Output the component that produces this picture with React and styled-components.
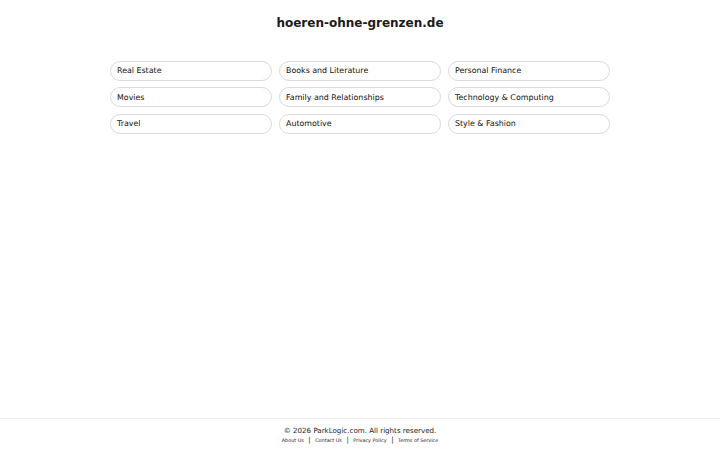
import React from "react";
import styled, { createGlobalStyle } from "styled-components";

const GlobalStyle = createGlobalStyle`
  html, body {
    margin: 0;
    padding: 0;
    background: #ffffff;
    font-family: "DejaVu Sans", "Liberation Sans", sans-serif;
  }
`;

const Page = styled.div`
  min-height: 100vh;
  display: flex;
  flex-direction: column;
`;

const Header = styled.header`
  padding-top: 16px;
  text-align: center;
`;

const Title = styled.h1`
  margin: 0;
  font-size: 12px;
  line-height: 14px;
  font-weight: bold;
  color: #1a1a1a;
`;

const Grid = styled.div`
  width: 500px;
  margin: 30.5px auto 0;
  display: grid;
  grid-template-columns: repeat(3, 1fr);
  column-gap: 7px;
  row-gap: 6.5px;
`;

const Pill = styled.a`
  display: flex;
  align-items: center;
  height: 20px;
  box-sizing: border-box;
  padding: 0 6px;
  border: 1px solid #dadada;
  border-radius: 999px;
  font-size: 7.9px;
  color: #111;
  text-decoration: none;
  cursor: pointer;
`;

const Footer = styled.footer`
  margin-top: auto;
  border-top: 1px solid #ececec;
  height: 32px;
  box-sizing: border-box;
  padding-top: 7px;
  text-align: center;
`;

const Copy = styled.div`
  font-size: 7.1px;
  line-height: 9px;
  color: #222;
`;

const Links = styled.div`
  display: flex;
  justify-content: center;
  align-items: center;
  margin-top: 0.5px;
  font-size: 4.9px;
  line-height: 8px;
  color: #222;
`;

const FooterLink = styled.a`
  color: inherit;
  text-decoration: none;
`;

const Sep = styled.span`
  margin: 0 4.5px;
  font-size: 7px;
`;

const categories = [
  "Real Estate",
  "Books and Literature",
  "Personal Finance",
  "Movies",
  "Family and Relationships",
  "Technology & Computing",
  "Travel",
  "Automotive",
  "Style & Fashion",
];

const footerLinks = ["About Us", "Contact Us", "Privacy Policy", "Terms of Service"];

const App = () => {
  return (
    <>
      <GlobalStyle />
      <Page>
        <Header>
          <Title>hoeren-ohne-grenzen.de</Title>
        </Header>
        <Grid>
          {categories.map((c) => (
            <Pill key={c}>{c}</Pill>
          ))}
        </Grid>
        <Footer>
          <Copy>© 2026 ParkLogic.com. All rights reserved.</Copy>
          <Links>
            {footerLinks.map((l, i) => (
              <React.Fragment key={l}>
                {i > 0 && <Sep>|</Sep>}
                <FooterLink>{l}</FooterLink>
              </React.Fragment>
            ))}
          </Links>
        </Footer>
      </Page>
    </>
  );
};

export default App;
